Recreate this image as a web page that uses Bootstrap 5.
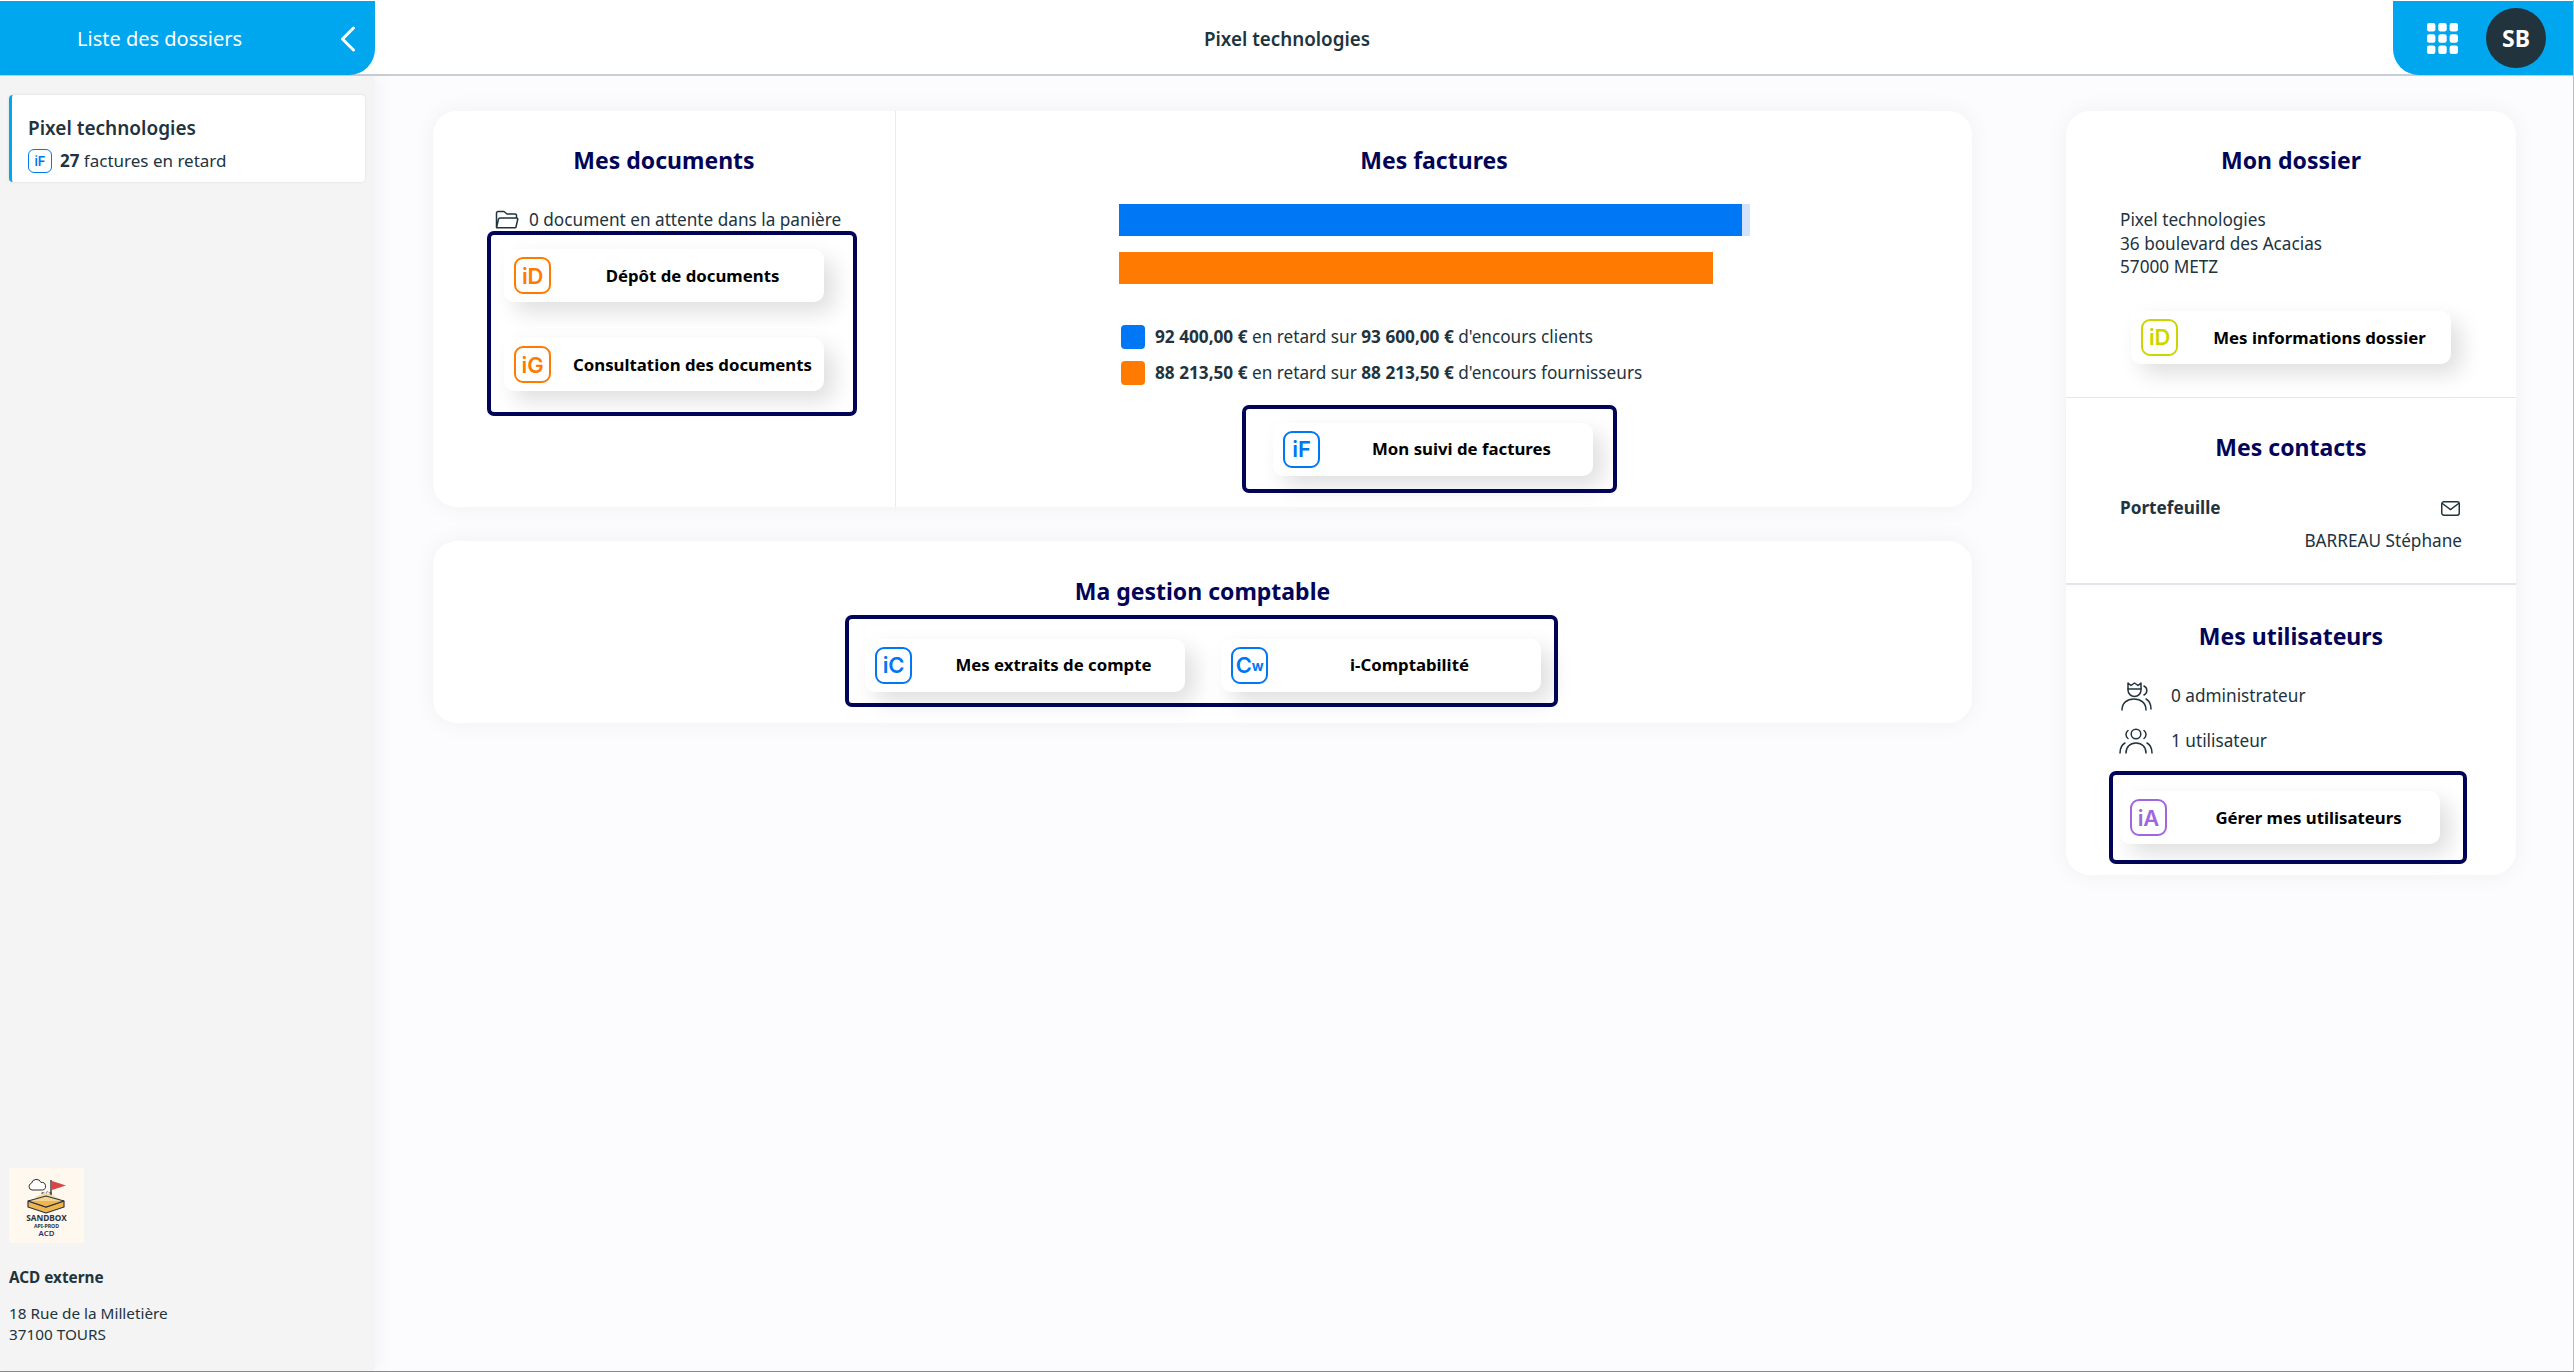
<!DOCTYPE html>
<html lang="fr">
  <head>
    <meta charset="UTF-8" />
    <meta name="viewport" content="width=device-width, initial-scale=1.0" />
    <title>Pixel technologies</title>
    <link
      href="https://cdn.jsdelivr.net/npm/bootstrap@5.3.0/dist/css/bootstrap.min.css"
      rel="stylesheet"
    />
    <style>
      html, body { height: 100%; }
      body {
        font-family: "Noto Sans", "Open Sans", sans-serif;
        font-size: 17.2px;
        color: #21333d;
        background: #fcfcfe;
        overflow: hidden;
      }
      .app-shell { height: 1372px; border-bottom: 1px solid #8a8a8a; border-right: 1px solid #bbb; }
      .top-bar { height: 76px; padding-top: 1px; background: #fff; border-bottom: 2px solid #c9ced2; }
      .top-left {
        width: 375px; height: 74px; background: #00a7ee; color: #fff;
        border-bottom-right-radius: 26px; font-size: 20px;
        padding: 2px 19px 0 77px;
      }
      .top-title { font-weight: 600; font-size: 18.8px; color: #21333d; padding-right: 194px; padding-top: 3px; }
      .top-right {
        width: 180px; height: 74px; background: #00a7ee;
        border-bottom-left-radius: 26px; padding-left: 34px; gap: 28px;
      }
      .avatar {
        width: 60px; height: 60px; background: #21333d; color: #fff;
        font-weight: 700; font-size: 23px; border-radius: 50%;
      }
      .side-bar {
        width: 375px; background: #f4f4f4; padding: 19px 10px 26px 9px;
        box-shadow: 6px 0 14px rgba(0, 0, 0, .03);
      }
      .folder-item {
        height: 87px; background: #fff; border-left: 3px solid #00a7ee;
        border-radius: 4px; padding: 20px 0 0 16px;
        box-shadow: 0 0 3px rgba(0, 0, 0, .1);
      }
      .folder-name { font-weight: 600; font-size: 19px; line-height: 26px; }
      .folder-late { font-size: 17px; line-height: 24px; margin-top: 8px; }
      .tile-mini {
        width: 24px; height: 24px; border: 1.5px solid #0077f5; border-radius: 6px;
        color: #0077f5; font: 600 13px Inter, sans-serif;
      }
      .logo-box { width: 75px; height: 75px; background: #fff8ee; margin-bottom: 24px; }
      .acd-name { font-weight: 700; font-size: 15.3px; line-height: 20px; margin-bottom: 16px; }
      .acd-addr { font-size: 15.3px; line-height: 21px; }
      .page-main { padding: 35px 58px 0; gap: 94px; }
      .col-left { width: 1539px; gap: 34px; }
      .col-right { width: 450px; height: 764px; }
      .panel { background: #fff; border-radius: 24px; box-shadow: 0 0 24px rgba(0, 0, 20, .05); }
      .panel-docs { height: 396px; }
      .panel-compta { height: 182px; padding-top: 34px; }
      .sec-docs { width: 463px; padding-top: 33px; border-right: 1px solid #e9e9ee; }
      .sec-fact { padding-top: 33px; }
      .sec-title { color: #020458; font-weight: 700; font-size: 23px; line-height: 32px; text-align: center; margin: 0; }
      .basket-line { margin: 32px 0 0 62px; line-height: 24px; gap: 10px; height: 24px; }
      .focus-box { border: 4px solid #020458; border-radius: 7px; }
      .box-docs { width: 370px; height: 185px; margin: -1px 0 0 54px; padding: 14px 13px; gap: 36px; }
      .tile-btn {
        width: 320px; height: 53px; background: #fff; border-radius: 10px;
        padding-left: 10px; box-shadow: 10px 10px 22px rgba(0, 0, 0, .13);
        color: #000; font-weight: 700; font-size: 16.8px;
      }
      .tile-label { flex: 1; text-align: center; padding: 0 0 0 10px; white-space: nowrap; }
      .tile-icon {
        width: 37px; height: 37px; border: 2px solid; border-radius: 9px; flex: none;
        font: 600 22px Inter, sans-serif; letter-spacing: -.2px;
      }
      .tile-icon small { font-size: 14px; font-weight: 700; }
      .ico-orange { color: #ff7a00; }
      .ico-blue { color: #0077f5; }
      .ico-lime { color: #cdd500; }
      .ico-violet { color: #a066e0; }
      .bars { width: 631px; margin: 28px 0 0 223px; gap: 16px; }
      .bar-track { height: 32px; background: #d3e3fc; }
      .bar-track-empty { height: 32px; }
      .bar-fill { height: 100%; }
      .fill-blue { background: #0077f5; }
      .fill-orange { background: #ff7a00; }
      .legend { margin: 41px 0 0 225px; gap: 12px; }
      .legend-row { height: 24px; gap: 10px; line-height: 24px; }
      .legend-sq { width: 24px; height: 24px; border-radius: 4px; }
      .box-fact { width: 375px; height: 88px; margin: 20px 0 0 346px; padding-left: 27px; }
      .box-compta { width: 713px; height: 92px; margin: 8px auto 0; padding: 8px 0 0 16px; gap: 36px; }
      .box-compta { transform: translateX(-1px); }
      .sec-right { padding: 33px 0 0 54px; }
      .sec-right .sec-title { margin-left: -54px; }
      .sec-dossier { height: 287px; border-bottom: 1px solid #e6e6eb; }
      .sec-contacts { height: 187px; padding-top: 33px; border-bottom: 2px solid #e4e4ea; box-shadow: 0 3px 5px rgba(0, 0, 0, .02); }
      .sec-users { padding-top: 35px; }
      .addr-lines { margin-top: 32px; line-height: 23.6px; }
      .dossier-btn { margin: 32px 0 0 11px; }
      .contact-head { margin-top: 33px; width: 342px; font-weight: 700; line-height: 24px; }
      .contact-name { width: 342px; text-align: right; margin-top: 9px; line-height: 24px; }
      .user-row { height: 34px; gap: 18px; line-height: 24px; }
      .user-icon { width: 34px; flex: none; margin-left: -1px; }
      .user-rows { margin-top: 27px; gap: 11px; }
      .box-users { width: 358px; height: 93px; margin: 13px 0 0 -11px; padding-left: 7px; }
      .mail-icon { margin-right: 2px; }
    </style>
  </head>
  <body>
    <div class="app-shell d-flex flex-column">
      <!-- Barre du haut -->
      <header class="top-bar d-flex align-items-start flex-shrink-0">
        <div class="top-left d-flex align-items-center justify-content-between">
          <span>Liste des dossiers</span>
          <svg width="16" height="26" viewBox="0 0 16 26" fill="none" stroke="#fff" stroke-width="3" stroke-linecap="round" stroke-linejoin="round"><path d="M13.5 2 2.500 13l11 11" /></svg>
        </div>
        <div class="top-title flex-grow-1 text-center align-self-center">Pixel technologies</div>
        <div class="top-right d-flex align-items-center">
          <svg width="31" height="31" viewBox="0 0 31 31" fill="#fff">
            <rect width="8.4" height="8.4" rx="2.2" /><rect x="11.3" width="8.4" height="8.4" rx="2.2" /><rect x="22.6" width="8.4" height="8.4" rx="2.2" />
            <rect y="11.3" width="8.4" height="8.4" rx="2.2" /><rect x="11.3" y="11.3" width="8.4" height="8.4" rx="2.2" /><rect x="22.6" y="11.3" width="8.4" height="8.4" rx="2.2" />
            <rect y="22.6" width="8.4" height="8.4" rx="2.2" /><rect x="11.3" y="22.6" width="8.4" height="8.4" rx="2.2" /><rect x="22.6" y="22.6" width="8.4" height="8.4" rx="2.2" />
          </svg>
          <div class="avatar d-flex align-items-center justify-content-center">SB</div>
        </div>
      </header>

      <div class="d-flex flex-grow-1">
        <!-- Colonne des dossiers -->
        <aside class="side-bar d-flex flex-column flex-shrink-0">
          <div class="folder-item">
            <div class="folder-name">Pixel technologies</div>
            <div class="folder-late d-flex align-items-center gap-2">
              <span class="tile-mini d-flex align-items-center justify-content-center">iF</span>
              <span><b>27</b> factures en retard</span>
            </div>
          </div>
          <div class="mt-auto">
            <div class="logo-box">
              <svg width="75" height="75" viewBox="0 0 75 75">
                <path d="M23 22a3.500 3.500 0 0 1-.5-6.800 5 5 0 0 1 9.500-.7 3.800 3.800 0 0 1 1.500 7.500z" fill="#fff" stroke="#333" stroke-width="1" />
                <text x="32" y="27" font-family="Liberation Mono, monospace" font-weight="700" font-size="6" fill="#333">&lt;/&gt;</text>
                <path d="M42 12v18" stroke="#444" stroke-width="1.5" />
                <path d="M43 13l14 4.500-14 4.500z" fill="#d9464a" />
                <path d="M26 29l10-4 6 2 7 3 3 1-16 3z" fill="#f3d9a4" />
                <path d="M19 33l18 6 18-6v6l-18 6-18-6z" fill="#efb64e" stroke="#2b3440" stroke-width="1.200" stroke-linejoin="round" />
                <path d="M19 33l18-5 18 5" fill="#f5d48f" stroke="#2b3440" stroke-width="1.200" />
                <path d="M19 33l18 6 18-6" fill="#efb64e" stroke="#2b3440" stroke-width="1.200" />
                <text x="37.500" y="53" text-anchor="middle" font-family="Noto Sans, sans-serif" font-weight="700" font-size="8.300" fill="#2b3440">SANDBOX</text>
                <text x="37.500" y="59.500" text-anchor="middle" font-family="Noto Sans, sans-serif" font-weight="700" font-size="5.200" fill="#2b3440">API-PROD</text>
                <text x="37.500" y="67.500" text-anchor="middle" font-family="Noto Sans, sans-serif" font-weight="600" font-size="7.800" fill="#2d3270">ACD</text>
              </svg>
            </div>
            <div class="acd-name">ACD externe</div>
            <div class="acd-addr">18 Rue de la Milletière<br />37100 TOURS</div>
          </div>
        </aside>

        <!-- Contenu -->
        <main class="page-main d-flex flex-grow-1 align-items-start">
          <div class="col-left d-flex flex-column">
            <section class="panel panel-docs d-flex">
              <div class="sec-docs flex-shrink-0">
                <h2 class="sec-title">Mes documents</h2>
                <div class="basket-line d-flex align-items-center">
                  <svg width="24" height="20" viewBox="0 0 24 20" fill="none" stroke="#21333d" stroke-width="1.500" stroke-linejoin="round"><path d="M1.500 17V3a1.500 1.500 0 0 1 1.500-1.500h6l3 2.500h8a1.500 1.500 0 0 1 1.500 1.500V8" /><path d="M1.500 17.500 3.500 9a1.500 1.500 0 0 1 1.500-1h16.500a1.200 1.200 0 0 1 1.200 1.500L21 17a1 1 0 0 1-1 .8H2z" /></svg>
                  <span>0 document en attente dans la panière</span>
                </div>
                <div class="focus-box box-docs d-flex flex-column">
                  <a class="tile-btn d-flex align-items-center text-decoration-none">
                    <span class="tile-icon ico-orange d-flex align-items-center justify-content-center">iD</span>
                    <span class="tile-label">Dépôt de documents</span>
                  </a>
                  <a class="tile-btn d-flex align-items-center text-decoration-none">
                    <span class="tile-icon ico-orange d-flex align-items-center justify-content-center">iG</span>
                    <span class="tile-label">Consultation des documents</span>
                  </a>
                </div>
              </div>
              <div class="sec-fact flex-grow-1">
                <h2 class="sec-title">Mes factures</h2>
                <div class="bars d-flex flex-column">
                  <div class="bar-track"><div class="bar-fill fill-blue" style="width: 98.7%"></div></div>
                  <div class="bar-track-empty"><div class="bar-fill fill-orange" style="width: 94.2%"></div></div>
                </div>
                <div class="legend d-flex flex-column">
                  <div class="legend-row d-flex align-items-center">
                    <span class="legend-sq fill-blue"></span>
                    <span><b>92 400,00 €</b> en retard sur <b>93 600,00 €</b> d'encours clients</span>
                  </div>
                  <div class="legend-row d-flex align-items-center">
                    <span class="legend-sq fill-orange"></span>
                    <span><b>88 213,50 €</b> en retard sur <b>88 213,50 €</b> d'encours fournisseurs</span>
                  </div>
                </div>
                <div class="focus-box box-fact d-flex align-items-center">
                  <a class="tile-btn d-flex align-items-center text-decoration-none">
                    <span class="tile-icon ico-blue d-flex align-items-center justify-content-center">iF</span>
                    <span class="tile-label">Mon suivi de factures</span>
                  </a>
                </div>
              </div>
            </section>

            <section class="panel panel-compta">
              <h2 class="sec-title">Ma gestion comptable</h2>
              <div class="focus-box box-compta d-flex align-items-center">
                <a class="tile-btn d-flex align-items-center text-decoration-none">
                  <span class="tile-icon ico-blue d-flex align-items-center justify-content-center">iC</span>
                  <span class="tile-label">Mes extraits de compte</span>
                </a>
                <a class="tile-btn d-flex align-items-center text-decoration-none">
                  <span class="tile-icon ico-blue d-flex align-items-center justify-content-center">C<small>w</small></span>
                  <span class="tile-label">i-Comptabilité</span>
                </a>
              </div>
            </section>
          </div>

          <div class="col-right panel">
            <section class="sec-right sec-dossier">
              <h2 class="sec-title">Mon dossier</h2>
              <div class="addr-lines">Pixel technologies<br />36 boulevard des Acacias<br />57000 METZ</div>
              <a class="tile-btn dossier-btn d-flex align-items-center text-decoration-none">
                <span class="tile-icon ico-lime d-flex align-items-center justify-content-center">iD</span>
                <span class="tile-label">Mes informations dossier</span>
              </a>
            </section>
            <section class="sec-right sec-contacts">
              <h2 class="sec-title">Mes contacts</h2>
              <div class="contact-head d-flex justify-content-between align-items-center">
                <span>Portefeuille</span>
                <svg class="mail-icon" width="19" height="15" viewBox="0 0 18 14" fill="none" stroke="#21333d" stroke-width="1.400" stroke-linejoin="round"><rect x=".7" y=".7" width="16.600" height="12.600" rx="2" /><path d="M1 2l8 6 8-6" /></svg>
              </div>
              <div class="contact-name">BARREAU Stéphane</div>
            </section>
            <section class="sec-right sec-users">
              <h2 class="sec-title">Mes utilisateurs</h2>
              <div class="user-rows d-flex flex-column">
                <div class="user-row d-flex align-items-center">
                  <svg class="user-icon" height="30" viewBox="0 0 34 30" fill="none" stroke="#21333d" stroke-width="1.500" stroke-linecap="round" stroke-linejoin="round">
                    <path d="M9 2l3 2.500L15.500 2 19 4.500 22 2v7a6.500 6.500 0 0 1-13 0z" /><path d="M9 8h13" /><path d="M25 5a5 5 0 0 1 0 9" /><path d="M3 29c0-7 5-11 12-11s12 4 12 11" /><path d="M27 18c3 1.500 5 5 5 10" />
                  </svg>
                  <span>0 administrateur</span>
                </div>
                <div class="user-row d-flex align-items-center">
                  <svg class="user-icon" height="26" viewBox="0 0 34 26" fill="none" stroke="#21333d" stroke-width="1.500" stroke-linecap="round" stroke-linejoin="round">
                    <circle cx="17" cy="6" r="4.800" /><path d="M9 2.500a5 5 0 0 0 0 8" /><path d="M25 2.500a5 5 0 0 1 0 8" /><path d="M7 25c0-6 4-10 10-10s10 4 10 10" /><path d="M1 25c0-5 1.500-8 5-10" /><path d="M33 25c0-5-1.500-8-5-10" />
                  </svg>
                  <span>1 utilisateur</span>
                </div>
              </div>
              <div class="focus-box box-users d-flex align-items-center">
                <a class="tile-btn d-flex align-items-center text-decoration-none">
                  <span class="tile-icon ico-violet d-flex align-items-center justify-content-center">iA</span>
                  <span class="tile-label">Gérer mes utilisateurs</span>
                </a>
              </div>
            </section>
          </div>
        </main>
      </div>
    </div>
    <script src="https://cdn.jsdelivr.net/npm/bootstrap@5.3.0/dist/js/bootstrap.bundle.min.js"></script>
  </body>
</html>
